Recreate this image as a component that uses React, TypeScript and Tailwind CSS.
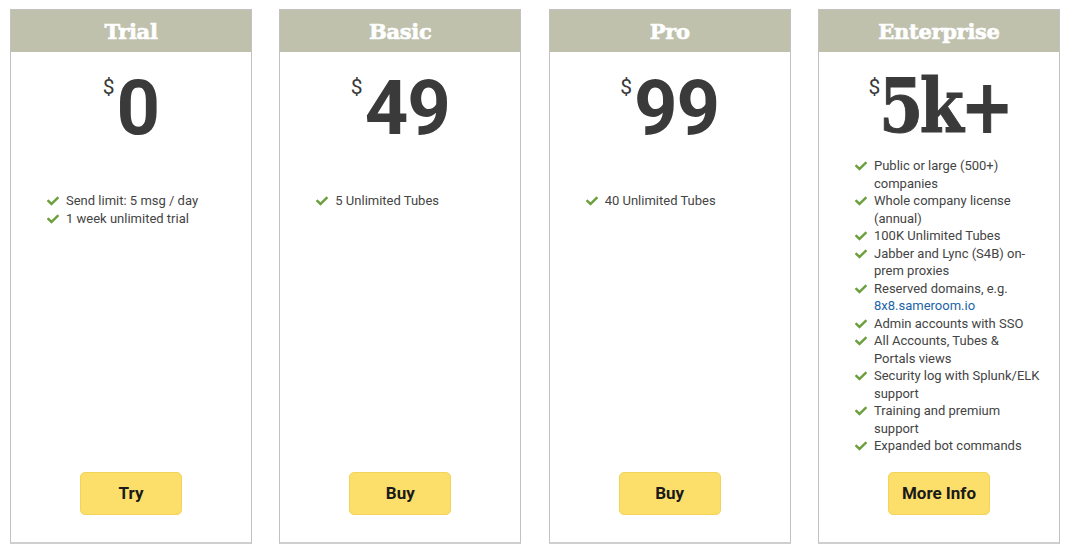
import React from "react";
import { FaCheck } from "react-icons/fa";

const plans: {
  name: string;
  price: string;
  slab?: boolean;
  features: React.ReactNode[];
  listTop: string;
  button: string;
}[] = [
  {
    name: "Trial",
    price: "0",
    features: ["Send limit: 5 msg / day", "1 week unlimited trial"],
    listTop: "mt-[45px]",
    button: "Try",
  },
  {
    name: "Basic",
    price: "49",
    features: ["5 Unlimited Tubes"],
    listTop: "mt-[45px]",
    button: "Buy",
  },
  {
    name: "Pro",
    price: "99",
    features: ["40 Unlimited Tubes"],
    listTop: "mt-[45px]",
    button: "Buy",
  },
  {
    name: "Enterprise",
    price: "5k+",
    slab: true,
    features: [
      "Public or large (500+) companies",
      "Whole company license (annual)",
      "100K Unlimited Tubes",
      "Jabber and Lync (S4B) on-prem proxies",
      <>
        Reserved domains, e.g.{" "}
        <span className="text-[#1b64a8]">8x8.sameroom.io</span>
      </>,
      "Admin accounts with SSO",
      "All Accounts, Tubes & Portals views",
      "Security log with Splunk/ELK support",
      "Training and premium support",
      "Expanded bot commands",
    ],
    listTop: "mt-[10px]",
    button: "More Info",
  },
];

export default function App() {
  return (
    <div
      className="w-[1070px] h-[552px] bg-white flex gap-[27.33px] pl-[10px] pt-[9px]"
      style={{ fontFamily: "Roboto, 'Liberation Sans', sans-serif" }}
    >
      {plans.map((p) => (
        <div
          key={p.name}
          className="w-[242px] h-[535px] flex flex-col border border-[#c2c2c2] border-b-2 border-b-[#cfcfcf]"
        >
          <div className="h-[42px] bg-[#bfc1ad] flex items-center justify-center">
            <span
              className="text-white text-[21px] font-bold leading-none tracking-[-0.3px]"
              style={{
                fontFamily: "'DejaVu Serif', serif",
                WebkitTextStroke: "0.7px white",
                textShadow: "0 0 1px rgba(0,0,0,0.15)",
              }}
            >
              {p.name}
            </span>
          </div>
          <div className="mt-[18px] h-[77px] flex justify-center items-start text-[#3a3a3a]">
            <span
              className={`text-[21px] leading-none mt-[7px] ${p.slab ? "-mr-[1px]" : "mr-[2px]"}`}
            >
              $
            </span>
            {p.slab ? (
              <span className="w-[130px] whitespace-nowrap -mt-[1px]">
                <span
                  className="inline-block origin-left scale-x-[0.86] text-[74px] leading-none font-bold tracking-[-4px]"
                  style={{
                    fontFamily: "'DejaVu Serif', serif",
                    WebkitTextStroke: "1px #3a3a3a",
                  }}
                >
                  {p.price}
                </span>
              </span>
            ) : (
              <span className="leading-none font-bold text-[76px] tracking-[-1px]">
                {p.price}
              </span>
            )}
          </div>
          <ul className={`${p.listTop} pl-[36px] pr-[10px] flex flex-col`}>
            {p.features.map((f, i) => (
              <li key={i} className="flex text-[13px] leading-[17.5px] text-[#444]">
                <FaCheck className="text-[#6a9f3b] w-[12px] h-[12px] mt-[3px] mr-[7px] shrink-0" />
                <span className="max-w-[166px]">{f}</span>
              </li>
            ))}
          </ul>
          <div className="mt-auto mb-[27px] flex justify-center">
            <button className="h-[43px] min-w-[102px] px-[13px] rounded-[5px] bg-[#fbdf6a] border border-[#f3d35a] text-[17px] font-bold text-[#1a1a1a]">
              {p.button}
            </button>
          </div>
        </div>
      ))}
    </div>
  );
}
